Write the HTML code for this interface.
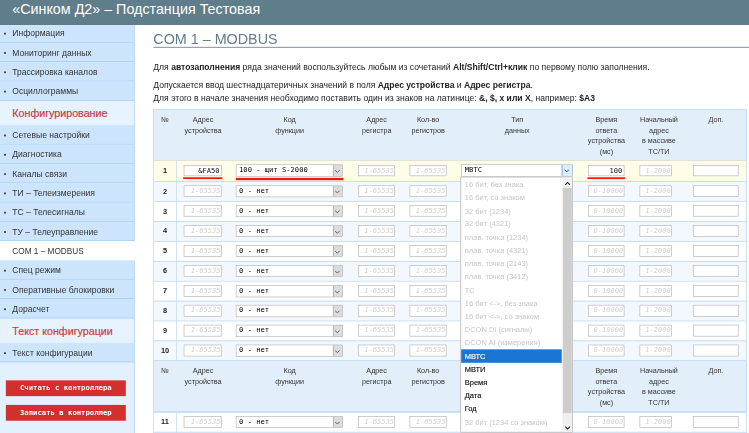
<!DOCTYPE html>
<html lang="ru">
<head>
<meta charset="utf-8">
<title>Синком Д2 – Подстанция Тестовая</title>
<style>
html,body{margin:0;padding:0;background:#fff;}
body{width:749px;height:433px;overflow:hidden;position:relative;}
#app{position:absolute;left:0;top:0;width:1280px;height:740px;transform:scale(0.58516);transform-origin:0 0;overflow:hidden;font-family:"Liberation Sans",sans-serif;color:#222;}
#app div,#app i{box-sizing:border-box;}
#hdr{position:absolute;left:0;top:0;width:1280px;height:41.5px;z-index:5;background:#607d8b;color:#fff;font-size:24.45px;line-height:32.6px;padding-left:21px;white-space:nowrap;}
#side{position:absolute;left:0;top:40px;width:230px;height:700px;background:#e3f0fd;border-right:1px solid #9cc3ea;}
#side .it{height:33px;line-height:34px;border-bottom:1px solid #9cc3ea;background:#cce5fd;font-size:14.6px;color:#333;padding-left:21px;position:relative;white-space:nowrap;}
#side .it:before{content:"";position:absolute;left:7px;top:16px;width:3px;height:3px;background:#333;}
#side .it.sel{background:#fff;border-bottom-color:#fff;font-size:14.1px;width:231px;}
#side .it.sel:before{display:none;}
#side .hd{height:42px;line-height:44.6px;background:#e6f2fd;color:#cb3a3a;-webkit-text-stroke:0.3px #cb3a3a;font-size:18.3px;padding-left:21px;white-space:nowrap;}
.btn{position:absolute;left:10px;width:205px;height:26.5px;background:#d32f2f;color:#fff;font:bold 12.4px/26px "DejaVu Sans Mono","Liberation Mono",monospace;text-align:center;white-space:nowrap;}
h1{position:absolute;left:262px;top:52px;margin:0;font-weight:normal;font-size:24.5px;line-height:30px;color:#607d8b;white-space:nowrap;}
#hr{position:absolute;left:262px;top:80px;width:1018px;height:2px;background:#90a4ae;}
.p{position:absolute;left:262px;font-size:14.65px;line-height:20px;color:#222;white-space:nowrap;}
#tbl{position:absolute;left:262px;top:187px;width:1014px;height:560px;background:#fff;border:1px solid #a9cdee;}
.th{position:absolute;left:262px;width:1014px;background:#e2effb;border:1px solid #a9cdee;}
.th span{position:absolute;top:7.3px;transform:translateX(-50%);text-align:center;font-size:12.3px;line-height:18.2px;color:#333;white-space:nowrap;}
.tr{position:absolute;left:262px;width:1014px;border-top:1px solid #a6cbee;border-left:1px solid #a9cdee;border-right:1px solid #a9cdee;background:#fff;}
.tr.e{background:#f3f8fe;}
.tr.a{background:#fffce8;border-top:1px solid #d9dccb;}
.tr .n{position:absolute;left:0;top:0;bottom:0;width:39px;border-right:1px solid #b3d3f0;text-align:center;font-weight:bold;font-size:12.6px;color:#222;}
.i{position:absolute;height:19.5px;background:#fff;border:1px solid #ababab;font:italic 12.1px/17px "DejaVu Sans Mono","Liberation Mono",monospace;color:#cfcfcf;text-align:right;padding-right:1px;overflow:hidden;white-space:nowrap;}
.i.v{font-style:normal;color:#111;padding-right:3px;}
.s{position:absolute;height:20.6px;background:#fff;border:1px solid #ababab;font:12.2px/16.8px "DejaVu Sans Mono","Liberation Mono",monospace;color:#000;padding-left:5px;white-space:nowrap;overflow:hidden;}
.s i{position:absolute;right:-1px;top:-1px;width:17.8px;height:20.6px;background:#dcdcdc;border:1px solid #999;}
.s.act i{background:#deedfb;border:1.8px solid #2f82dc;width:19px;}
.s.act svg{left:3px;top:6.6px;}
.s.act path{stroke:#333;stroke-width:1.65;}
.s svg{position:absolute;left:2.9px;top:7.8px;}
.u{position:absolute;height:3.5px;background:#f5141a;}
</style>
</head>
<body>
<div id="app">
<div id="hdr">«Синком Д2» – Подстанция Тестовая</div>
<div id="side">
<div class="it">Информация</div>
<div class="it">Мониторинг данных</div>
<div class="it">Трассировка каналов</div>
<div class="it">Осциллограммы</div>
<div class="hd">Конфигурирование</div>
<div class="it">Сетевые настройки</div>
<div class="it">Диагностика</div>
<div class="it">Каналы связи</div>
<div class="it">ТИ – Телеизмерения</div>
<div class="it">ТС – Телесигналы</div>
<div class="it">ТУ – Телеуправление</div>
<div class="it sel">COM 1 – MODBUS</div>
<div class="it">Спец режим</div>
<div class="it">Оперативные блокировки</div>
<div class="it">Дорасчет</div>
<div class="hd">Текст конфигурации</div>
<div class="it">Текст конфигурации</div>
<div class="btn" style="top:610px">Считать с контроллера</div>
<div class="btn" style="top:652px">Записать в контроллер</div>
</div>
<h1>COM 1 – MODBUS</h1><div id="hr"></div>
<div class="p" style="top:105px">Для <b>автозаполнения</b> ряда значений воспользуйтесь любым из сочетаний <b>Alt/Shift/Ctrl+клик</b> по первому полю заполнения.</div>
<div class="p" style="top:136px">Допускается ввод шестнадцатеричных значений в поля <b>Адрес устройства</b> и <b>Адрес регистра</b>.</div>
<div class="p" style="top:156.5px">Для этого в начале значения необходимо поставить один из знаков на латинице: <b>&amp;, $, x или X</b>, например: <b>$A3</b></div>
<div class="th" style="top:187.0px;height:88.0px"><span style="left:19.0px">№</span><span style="left:84.0px">Адрес<br>устройства</span><span style="left:232.0px">Код<br>функции</span><span style="left:380.7px">Адрес<br>регистра</span><span style="left:468.6px">Кол-во<br>регистров</span><span style="left:620.9px">Тип<br>данных</span><span style="left:773.3px">Время<br>ответа<br>устройства<br>(мс)</span><span style="left:863.0px">Начальный<br>адрес<br>в массиве<br>ТС/ТИ</span><span style="left:960.5px">Доп.</span></div>
<div class="tr a" style="top:274.30px;height:35.20px;line-height:34.20px">
<div class="n">1</div>
<div class="i v" style="left:51.0px;top:6.4px;width:65.0px">&amp;FA50</div>
<div class="s" style="left:139.5px;top:6.1px;width:183.9px">100 - щит S-2000<i><svg width="9" height="6" viewBox="0 0 9 6"><path d="M0.7 0.9 L4.5 4.7 L8.3 0.9" fill="none" stroke="#505050" stroke-width="1.5"/></svg></i></div>
<div class="i" style="left:349.0px;top:6.4px;width:63.3px">1-65535</div>
<div class="i" style="left:436.8px;top:6.4px;width:63.6px">1-65535</div>
<div class="s act" style="left:525.3px;top:6.1px;width:191.2px">МВТС<i><svg width="9" height="6" viewBox="0 0 9 6"><path d="M0.7 0.9 L4.5 4.7 L8.3 0.9" fill="none" stroke="#505050" stroke-width="1.5"/></svg></i></div>
<div class="i v" style="left:742.3px;top:6.4px;width:62.0px">100</div>
<div class="i" style="left:829.9px;top:6.4px;width:55.5px">1-2000</div>
<div class="i" style="left:921.6px;top:6.4px;width:77.8px"></div>
<div class="u" style="left:50.0px;top:28.0px;width:67.0px;height:2.8px"></div>
<div class="u" style="left:139.5px;top:28.9px;width:184.5px;height:3.4px"></div>
<div class="u" style="left:741.3px;top:28.0px;width:64.0px;height:2.8px"></div>
</div>
<div class="tr e" style="top:309.50px;height:34.08px;line-height:33.08px">
<div class="n">2</div>
<div class="i" style="left:51.0px;top:6.4px;width:65.0px">1-65535</div>
<div class="s" style="left:139.5px;top:6.1px;width:183.9px">0 - нет<i><svg width="9" height="6" viewBox="0 0 9 6"><path d="M0.7 0.9 L4.5 4.7 L8.3 0.9" fill="none" stroke="#505050" stroke-width="1.5"/></svg></i></div>
<div class="i" style="left:349.0px;top:6.4px;width:63.3px">1-65535</div>
<div class="i" style="left:436.8px;top:6.4px;width:63.6px">1-65535</div>
<div class="s" style="left:525.3px;top:6.1px;width:191.2px"><i><svg width="9" height="6" viewBox="0 0 9 6"><path d="M0.7 0.9 L4.5 4.7 L8.3 0.9" fill="none" stroke="#505050" stroke-width="1.5"/></svg></i></div>
<div class="i" style="left:742.3px;top:6.4px;width:62.0px">0-10000</div>
<div class="i" style="left:829.9px;top:6.4px;width:55.5px">1-2000</div>
<div class="i" style="left:921.6px;top:6.4px;width:77.8px"></div>
</div>
<div class="tr" style="top:343.57px;height:34.08px;line-height:33.08px">
<div class="n">3</div>
<div class="i" style="left:51.0px;top:6.4px;width:65.0px">1-65535</div>
<div class="s" style="left:139.5px;top:6.1px;width:183.9px">0 - нет<i><svg width="9" height="6" viewBox="0 0 9 6"><path d="M0.7 0.9 L4.5 4.7 L8.3 0.9" fill="none" stroke="#505050" stroke-width="1.5"/></svg></i></div>
<div class="i" style="left:349.0px;top:6.4px;width:63.3px">1-65535</div>
<div class="i" style="left:436.8px;top:6.4px;width:63.6px">1-65535</div>
<div class="s" style="left:525.3px;top:6.1px;width:191.2px"><i><svg width="9" height="6" viewBox="0 0 9 6"><path d="M0.7 0.9 L4.5 4.7 L8.3 0.9" fill="none" stroke="#505050" stroke-width="1.5"/></svg></i></div>
<div class="i" style="left:742.3px;top:6.4px;width:62.0px">0-10000</div>
<div class="i" style="left:829.9px;top:6.4px;width:55.5px">1-2000</div>
<div class="i" style="left:921.6px;top:6.4px;width:77.8px"></div>
</div>
<div class="tr e" style="top:377.65px;height:34.08px;line-height:33.08px">
<div class="n">4</div>
<div class="i" style="left:51.0px;top:6.4px;width:65.0px">1-65535</div>
<div class="s" style="left:139.5px;top:6.1px;width:183.9px">0 - нет<i><svg width="9" height="6" viewBox="0 0 9 6"><path d="M0.7 0.9 L4.5 4.7 L8.3 0.9" fill="none" stroke="#505050" stroke-width="1.5"/></svg></i></div>
<div class="i" style="left:349.0px;top:6.4px;width:63.3px">1-65535</div>
<div class="i" style="left:436.8px;top:6.4px;width:63.6px">1-65535</div>
<div class="s" style="left:525.3px;top:6.1px;width:191.2px"><i><svg width="9" height="6" viewBox="0 0 9 6"><path d="M0.7 0.9 L4.5 4.7 L8.3 0.9" fill="none" stroke="#505050" stroke-width="1.5"/></svg></i></div>
<div class="i" style="left:742.3px;top:6.4px;width:62.0px">0-10000</div>
<div class="i" style="left:829.9px;top:6.4px;width:55.5px">1-2000</div>
<div class="i" style="left:921.6px;top:6.4px;width:77.8px"></div>
</div>
<div class="tr" style="top:411.73px;height:34.08px;line-height:33.08px">
<div class="n">5</div>
<div class="i" style="left:51.0px;top:6.4px;width:65.0px">1-65535</div>
<div class="s" style="left:139.5px;top:6.1px;width:183.9px">0 - нет<i><svg width="9" height="6" viewBox="0 0 9 6"><path d="M0.7 0.9 L4.5 4.7 L8.3 0.9" fill="none" stroke="#505050" stroke-width="1.5"/></svg></i></div>
<div class="i" style="left:349.0px;top:6.4px;width:63.3px">1-65535</div>
<div class="i" style="left:436.8px;top:6.4px;width:63.6px">1-65535</div>
<div class="s" style="left:525.3px;top:6.1px;width:191.2px"><i><svg width="9" height="6" viewBox="0 0 9 6"><path d="M0.7 0.9 L4.5 4.7 L8.3 0.9" fill="none" stroke="#505050" stroke-width="1.5"/></svg></i></div>
<div class="i" style="left:742.3px;top:6.4px;width:62.0px">0-10000</div>
<div class="i" style="left:829.9px;top:6.4px;width:55.5px">1-2000</div>
<div class="i" style="left:921.6px;top:6.4px;width:77.8px"></div>
</div>
<div class="tr e" style="top:445.80px;height:34.08px;line-height:33.08px">
<div class="n">6</div>
<div class="i" style="left:51.0px;top:6.4px;width:65.0px">1-65535</div>
<div class="s" style="left:139.5px;top:6.1px;width:183.9px">0 - нет<i><svg width="9" height="6" viewBox="0 0 9 6"><path d="M0.7 0.9 L4.5 4.7 L8.3 0.9" fill="none" stroke="#505050" stroke-width="1.5"/></svg></i></div>
<div class="i" style="left:349.0px;top:6.4px;width:63.3px">1-65535</div>
<div class="i" style="left:436.8px;top:6.4px;width:63.6px">1-65535</div>
<div class="s" style="left:525.3px;top:6.1px;width:191.2px"><i><svg width="9" height="6" viewBox="0 0 9 6"><path d="M0.7 0.9 L4.5 4.7 L8.3 0.9" fill="none" stroke="#505050" stroke-width="1.5"/></svg></i></div>
<div class="i" style="left:742.3px;top:6.4px;width:62.0px">0-10000</div>
<div class="i" style="left:829.9px;top:6.4px;width:55.5px">1-2000</div>
<div class="i" style="left:921.6px;top:6.4px;width:77.8px"></div>
</div>
<div class="tr" style="top:479.88px;height:34.08px;line-height:33.08px">
<div class="n">7</div>
<div class="i" style="left:51.0px;top:6.4px;width:65.0px">1-65535</div>
<div class="s" style="left:139.5px;top:6.1px;width:183.9px">0 - нет<i><svg width="9" height="6" viewBox="0 0 9 6"><path d="M0.7 0.9 L4.5 4.7 L8.3 0.9" fill="none" stroke="#505050" stroke-width="1.5"/></svg></i></div>
<div class="i" style="left:349.0px;top:6.4px;width:63.3px">1-65535</div>
<div class="i" style="left:436.8px;top:6.4px;width:63.6px">1-65535</div>
<div class="s" style="left:525.3px;top:6.1px;width:191.2px"><i><svg width="9" height="6" viewBox="0 0 9 6"><path d="M0.7 0.9 L4.5 4.7 L8.3 0.9" fill="none" stroke="#505050" stroke-width="1.5"/></svg></i></div>
<div class="i" style="left:742.3px;top:6.4px;width:62.0px">0-10000</div>
<div class="i" style="left:829.9px;top:6.4px;width:55.5px">1-2000</div>
<div class="i" style="left:921.6px;top:6.4px;width:77.8px"></div>
</div>
<div class="tr e" style="top:513.95px;height:34.08px;line-height:33.08px">
<div class="n">8</div>
<div class="i" style="left:51.0px;top:6.4px;width:65.0px">1-65535</div>
<div class="s" style="left:139.5px;top:6.1px;width:183.9px">0 - нет<i><svg width="9" height="6" viewBox="0 0 9 6"><path d="M0.7 0.9 L4.5 4.7 L8.3 0.9" fill="none" stroke="#505050" stroke-width="1.5"/></svg></i></div>
<div class="i" style="left:349.0px;top:6.4px;width:63.3px">1-65535</div>
<div class="i" style="left:436.8px;top:6.4px;width:63.6px">1-65535</div>
<div class="s" style="left:525.3px;top:6.1px;width:191.2px"><i><svg width="9" height="6" viewBox="0 0 9 6"><path d="M0.7 0.9 L4.5 4.7 L8.3 0.9" fill="none" stroke="#505050" stroke-width="1.5"/></svg></i></div>
<div class="i" style="left:742.3px;top:6.4px;width:62.0px">0-10000</div>
<div class="i" style="left:829.9px;top:6.4px;width:55.5px">1-2000</div>
<div class="i" style="left:921.6px;top:6.4px;width:77.8px"></div>
</div>
<div class="tr" style="top:548.03px;height:34.08px;line-height:33.08px">
<div class="n">9</div>
<div class="i" style="left:51.0px;top:6.4px;width:65.0px">1-65535</div>
<div class="s" style="left:139.5px;top:6.1px;width:183.9px">0 - нет<i><svg width="9" height="6" viewBox="0 0 9 6"><path d="M0.7 0.9 L4.5 4.7 L8.3 0.9" fill="none" stroke="#505050" stroke-width="1.5"/></svg></i></div>
<div class="i" style="left:349.0px;top:6.4px;width:63.3px">1-65535</div>
<div class="i" style="left:436.8px;top:6.4px;width:63.6px">1-65535</div>
<div class="s" style="left:525.3px;top:6.1px;width:191.2px"><i><svg width="9" height="6" viewBox="0 0 9 6"><path d="M0.7 0.9 L4.5 4.7 L8.3 0.9" fill="none" stroke="#505050" stroke-width="1.5"/></svg></i></div>
<div class="i" style="left:742.3px;top:6.4px;width:62.0px">0-10000</div>
<div class="i" style="left:829.9px;top:6.4px;width:55.5px">1-2000</div>
<div class="i" style="left:921.6px;top:6.4px;width:77.8px"></div>
</div>
<div class="tr e" style="top:582.10px;height:34.08px;line-height:33.08px">
<div class="n">10</div>
<div class="i" style="left:51.0px;top:6.4px;width:65.0px">1-65535</div>
<div class="s" style="left:139.5px;top:6.1px;width:183.9px">0 - нет<i><svg width="9" height="6" viewBox="0 0 9 6"><path d="M0.7 0.9 L4.5 4.7 L8.3 0.9" fill="none" stroke="#505050" stroke-width="1.5"/></svg></i></div>
<div class="i" style="left:349.0px;top:6.4px;width:63.3px">1-65535</div>
<div class="i" style="left:436.8px;top:6.4px;width:63.6px">1-65535</div>
<div class="s" style="left:525.3px;top:6.1px;width:191.2px"><i><svg width="9" height="6" viewBox="0 0 9 6"><path d="M0.7 0.9 L4.5 4.7 L8.3 0.9" fill="none" stroke="#505050" stroke-width="1.5"/></svg></i></div>
<div class="i" style="left:742.3px;top:6.4px;width:62.0px">0-10000</div>
<div class="i" style="left:829.9px;top:6.4px;width:55.5px">1-2000</div>
<div class="i" style="left:921.6px;top:6.4px;width:77.8px"></div>
</div>
<div class="th" style="top:616.2px;height:88.2px"><span style="left:19.0px">№</span><span style="left:84.0px">Адрес<br>устройства</span><span style="left:232.0px">Код<br>функции</span><span style="left:380.7px">Адрес<br>регистра</span><span style="left:468.6px">Кол-во<br>регистров</span><span style="left:620.9px">Тип<br>данных</span><span style="left:773.3px">Время<br>ответа<br>устройства<br>(мс)</span><span style="left:863.0px">Начальный<br>адрес<br>в массиве<br>ТС/ТИ</span><span style="left:960.5px">Доп.</span></div>
<div class="tr" style="top:703.67px;height:34.08px;line-height:33.08px">
<div class="n">11</div>
<div class="i" style="left:51.0px;top:6.4px;width:65.0px">1-65535</div>
<div class="s" style="left:139.5px;top:6.1px;width:183.9px">0 - нет<i><svg width="9" height="6" viewBox="0 0 9 6"><path d="M0.7 0.9 L4.5 4.7 L8.3 0.9" fill="none" stroke="#505050" stroke-width="1.5"/></svg></i></div>
<div class="i" style="left:349.0px;top:6.4px;width:63.3px">1-65535</div>
<div class="i" style="left:436.8px;top:6.4px;width:63.6px">1-65535</div>
<div class="s" style="left:525.3px;top:6.1px;width:191.2px"><i><svg width="9" height="6" viewBox="0 0 9 6"><path d="M0.7 0.9 L4.5 4.7 L8.3 0.9" fill="none" stroke="#505050" stroke-width="1.5"/></svg></i></div>
<div class="i" style="left:742.3px;top:6.4px;width:62.0px">0-10000</div>
<div class="i" style="left:829.9px;top:6.4px;width:55.5px">1-2000</div>
<div class="i" style="left:921.6px;top:6.4px;width:77.8px"></div>
</div>
<div class="tr e" style="top:737.75px;height:34.08px;line-height:33.08px">
<div class="n">12</div>
<div class="i" style="left:51.0px;top:6.4px;width:65.0px">1-65535</div>
<div class="s" style="left:139.5px;top:6.1px;width:183.9px">0 - нет<i><svg width="9" height="6" viewBox="0 0 9 6"><path d="M0.7 0.9 L4.5 4.7 L8.3 0.9" fill="none" stroke="#505050" stroke-width="1.5"/></svg></i></div>
<div class="i" style="left:349.0px;top:6.4px;width:63.3px">1-65535</div>
<div class="i" style="left:436.8px;top:6.4px;width:63.6px">1-65535</div>
<div class="s" style="left:525.3px;top:6.1px;width:191.2px"><i><svg width="9" height="6" viewBox="0 0 9 6"><path d="M0.7 0.9 L4.5 4.7 L8.3 0.9" fill="none" stroke="#505050" stroke-width="1.5"/></svg></i></div>
<div class="i" style="left:742.3px;top:6.4px;width:62.0px">0-10000</div>
<div class="i" style="left:829.9px;top:6.4px;width:55.5px">1-2000</div>
<div class="i" style="left:921.6px;top:6.4px;width:77.8px"></div>
</div>
<div id="dd" style="position:absolute;left:786.8px;top:302px;width:192.6px;height:437px;background:#fff;border:1px solid #9a9a9a;overflow:hidden">
<div style="position:absolute;left:0;top:1.50px;width:172px;height:22.56px;line-height:22.56px;padding-left:6.5px;font-size:12.8px;color:#c6c6c6;white-space:nowrap">16 бит, без знака</div>
<div style="position:absolute;left:0;top:24.06px;width:172px;height:22.56px;line-height:22.56px;padding-left:6.5px;font-size:12.8px;color:#c6c6c6;white-space:nowrap">16 бит, со знаком</div>
<div style="position:absolute;left:0;top:46.62px;width:172px;height:22.56px;line-height:22.56px;padding-left:6.5px;font-size:12.8px;color:#c6c6c6;white-space:nowrap">32 бит (1234)</div>
<div style="position:absolute;left:0;top:69.18px;width:172px;height:22.56px;line-height:22.56px;padding-left:6.5px;font-size:12.8px;color:#c6c6c6;white-space:nowrap">32 бит (4321)</div>
<div style="position:absolute;left:0;top:91.74px;width:172px;height:22.56px;line-height:22.56px;padding-left:6.5px;font-size:12.8px;color:#c6c6c6;white-space:nowrap">плав. точка (1234)</div>
<div style="position:absolute;left:0;top:114.30px;width:172px;height:22.56px;line-height:22.56px;padding-left:6.5px;font-size:12.8px;color:#c6c6c6;white-space:nowrap">плав. точка (4321)</div>
<div style="position:absolute;left:0;top:136.86px;width:172px;height:22.56px;line-height:22.56px;padding-left:6.5px;font-size:12.8px;color:#c6c6c6;white-space:nowrap">плав. точка (2143)</div>
<div style="position:absolute;left:0;top:159.42px;width:172px;height:22.56px;line-height:22.56px;padding-left:6.5px;font-size:12.8px;color:#c6c6c6;white-space:nowrap">плав. точка (3412)</div>
<div style="position:absolute;left:0;top:181.98px;width:172px;height:22.56px;line-height:22.56px;padding-left:6.5px;font-size:12.8px;color:#c6c6c6;white-space:nowrap">ТС</div>
<div style="position:absolute;left:0;top:204.54px;width:172px;height:22.56px;line-height:22.56px;padding-left:6.5px;font-size:12.8px;color:#c6c6c6;white-space:nowrap">16 бит &lt;-&gt;, без знака</div>
<div style="position:absolute;left:0;top:227.10px;width:172px;height:22.56px;line-height:22.56px;padding-left:6.5px;font-size:12.8px;color:#c6c6c6;white-space:nowrap">16 бит &lt;-&gt;, со знаком</div>
<div style="position:absolute;left:0;top:249.66px;width:172px;height:22.56px;line-height:22.56px;padding-left:6.5px;font-size:12.8px;color:#c6c6c6;white-space:nowrap">DCON DI (сигналы)</div>
<div style="position:absolute;left:0;top:272.22px;width:172px;height:22.56px;line-height:22.56px;padding-left:6.5px;font-size:12.8px;color:#c6c6c6;white-space:nowrap">DCON AI (измерения)</div>
<div style="position:absolute;left:0;top:293.98px;width:172px;height:22.56px;line-height:24.16px;padding-left:6.5px;font-size:12.8px;color:#fff;-webkit-text-stroke:0.25px #fff;background:#1976d2;white-space:nowrap">МВТС</div>
<div style="position:absolute;left:0;top:317.34px;width:172px;height:22.56px;line-height:22.56px;padding-left:6.5px;font-size:12.8px;color:#111;-webkit-text-stroke:0.25px #111;white-space:nowrap">МВТИ</div>
<div style="position:absolute;left:0;top:339.90px;width:172px;height:22.56px;line-height:22.56px;padding-left:6.5px;font-size:12.8px;color:#111;-webkit-text-stroke:0.25px #111;white-space:nowrap">Время</div>
<div style="position:absolute;left:0;top:362.46px;width:172px;height:22.56px;line-height:22.56px;padding-left:6.5px;font-size:12.8px;color:#111;-webkit-text-stroke:0.25px #111;white-space:nowrap">Дата</div>
<div style="position:absolute;left:0;top:385.02px;width:172px;height:22.56px;line-height:22.56px;padding-left:6.5px;font-size:12.8px;color:#111;-webkit-text-stroke:0.25px #111;white-space:nowrap">Год</div>
<div style="position:absolute;left:0;top:407.58px;width:172px;height:22.56px;line-height:22.56px;padding-left:6.5px;font-size:12.8px;color:#c6c6c6;white-space:nowrap">32 бит (1234 со знаком)</div>
<div style="position:absolute;left:0;top:430.14px;width:172px;height:22.56px;line-height:22.56px;padding-left:6.5px;font-size:12.8px;color:#c6c6c6;white-space:nowrap">32 бит (4321 со знаком)</div>
<div style="position:absolute;right:0;top:0;width:17px;height:435px;background:#f0f0f0">
<div style="position:absolute;left:0.4px;top:18px;width:15.3px;height:385px;background:#cdcdcd"></div>
<svg style="position:absolute;left:4px;top:6.5px" width="10" height="7" viewBox="0 0 10 7"><path d="M1 6 L5 1.8 L9 6" fill="none" stroke="#222" stroke-width="1.9"/></svg>
<svg style="position:absolute;left:4px;top:424.5px" width="10" height="7" viewBox="0 0 10 7"><path d="M1 1 L5 5.2 L9 1" fill="none" stroke="#222" stroke-width="1.9"/></svg>
</div></div>
</div>
</body>
</html>
